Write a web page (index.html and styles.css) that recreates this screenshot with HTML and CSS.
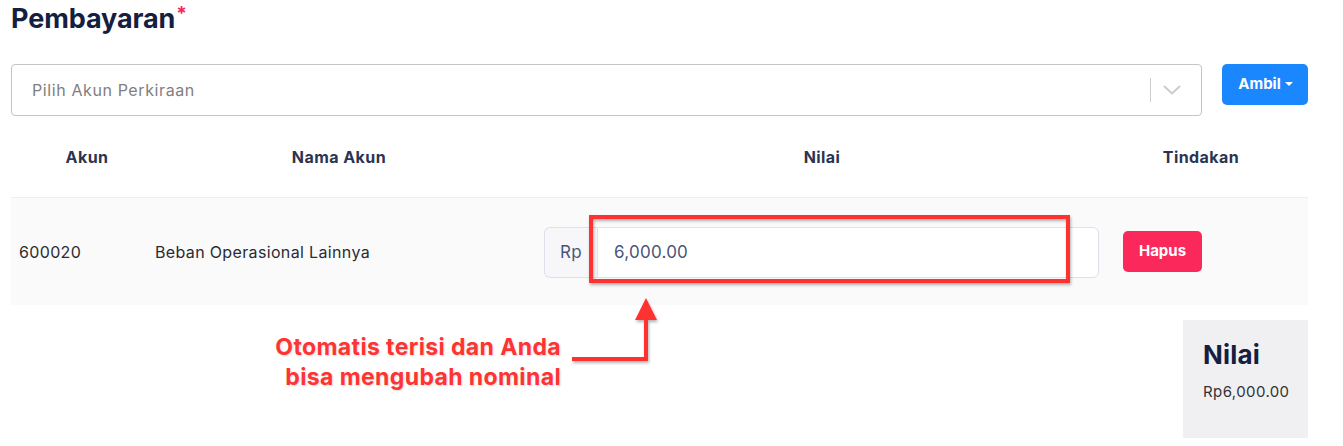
FILE: index.html
```html
<!DOCTYPE html>
<html lang="id">
<head>
<meta charset="utf-8">
<title>Pembayaran</title>
<link rel="stylesheet" href="styles.css">
</head>
<body>
<div class="page">
  <h2 class="title">Pembayaran<span class="req">*</span></h2>

  <div class="select-row">
    <div class="select">
      <span class="placeholder">Pilih Akun Perkiraan</span>
      <span class="indicators">
        <span class="sep"></span>
        <svg class="chev" width="20" height="20" viewBox="0 0 20 20"><path d="M2.5 6.5 L10 13.5 L17.5 6.5" fill="none" stroke="#cccccc" stroke-width="2" stroke-linecap="round" stroke-linejoin="round"/></svg>
      </span>
    </div>
    <button class="btn-ambil">Ambil<span class="caret"></span></button>
  </div>

  <div class="thead">
    <div class="th">Akun</div>
    <div class="th">Nama Akun</div>
    <div class="th">Nilai</div>
    <div class="th">Tindakan</div>
  </div>

  <div class="trow">
    <div class="td">600020</div>
    <div class="td">Beban Operasional Lainnya</div>
    <div class="td">
      <div class="input-group">
        <span class="addon">Rp</span>
        <span class="input">6,000.00</span>
      </div>
    </div>
    <div class="td"><button class="btn-hapus">Hapus</button></div>
  </div>

  <div class="bottom">
    <div class="note">Otomatis terisi dan Anda<br>bisa mengubah nominal</div>
    <div class="summary">
      <div class="sum-title">Nilai</div>
      <div class="sum-value">Rp6,000.00</div>
    </div>
  </div>

  <svg class="annot" width="1343" height="446" viewBox="0 0 1343 446">
    <defs>
      <filter id="sh" x="-10%" y="-10%" width="120%" height="130%">
        <feDropShadow dx="1" dy="2" stdDeviation="1.5" flood-color="#000" flood-opacity="0.3"/>
      </filter>
    </defs>
    <g filter="url(#sh)">
      <rect x="591" y="217" width="477" height="64" fill="none" stroke="#ff3333" stroke-width="4"/>
      <path d="M572 359 H646 V318" fill="none" stroke="#ff3333" stroke-width="4"/>
      <path d="M635 320 L646 298 L657 320 Z" fill="#ff3333"/>
    </g>
  </svg>
</div>
</body>
</html>
```

FILE: styles.css
```css
* { box-sizing: border-box; }
html, body { margin: 0; padding: 0; background: #ffffff; }
body {
  font-family: Inter, "Noto Sans", "Liberation Sans", sans-serif;
  color: #222;
}
.page {
  position: relative;
  width: 1343px;
  height: 446px;
  padding: 0 35px 0 11px;
  overflow: hidden;
}
.title {
  margin: 3px 0 0;
  font-size: 27px;
  line-height: 32px;
  font-weight: 700;
  color: #14203f;
  letter-spacing: -0.1px;
}
.req {
  color: #f5265d;
  font-size: 19px;
  vertical-align: top;
  position: relative;
  top: -5px;
  margin-left: 1px;
}
.select-row {
  display: flex;
  align-items: flex-start;
  gap: 20px;
  margin-top: 29px;
}
.select {
  flex: 1;
  height: 52px;
  border: 1px solid #c4c4c4;
  border-radius: 4px;
  display: flex;
  align-items: center;
  justify-content: space-between;
  padding-left: 20px;
}
.placeholder {
  color: #808080;
  font-size: 16px;
  letter-spacing: 0.6px;
}
.indicators {
  display: flex;
  align-items: center;
  height: 100%;
}
.sep {
  width: 1px;
  height: 24px;
  background: #cccccc;
  margin-right: 11px;
}
.chev { margin-right: 19px; }
.btn-ambil {
  width: 86px;
  height: 41px;
  border: none;
  border-radius: 5px;
  background: #1a87ff;
  color: #ffffff;
  font-family: inherit;
  font-size: 15px;
  font-weight: 700;
  display: flex;
  align-items: center;
  justify-content: center;
  padding: 0 0 2px 1px;
}
.caret {
  display: inline-block;
  width: 0; height: 0;
  border-left: 4px solid transparent;
  border-right: 4px solid transparent;
  border-top: 4px solid #ffffff;
  margin-left: 4px;
  margin-top: 1px;
}
.thead {
  display: grid;
  grid-template-columns: 152px 352px 614px 144px;
  margin-top: 17px;
  height: 64px;
  align-items: center;
}
.th {
  text-align: center;
  font-size: 16px;
  font-weight: 700;
  letter-spacing: 0.45px;
  color: #2b3450;
  padding-bottom: 16px;
}
.trow {
  display: grid;
  grid-template-columns: 136px 384px 581px 196px;
  height: 108px;
  align-items: center;
  background: #fafafa;
  border-top: 1px solid #eeeeee;
}
.td {
  padding-left: 8px;
  font-size: 16px;
  letter-spacing: 0.35px;
  color: #2b2b33;
}
.td:nth-child(3) { padding: 0 13px; }
.td:nth-child(4) { padding-left: 11px; }
.input-group {
  display: flex;
  height: 51px;
  margin-top: 1px;
}
.addon {
  width: 53px;
  display: flex;
  align-items: center;
  justify-content: center;
  background: #f7f7fa;
  border: 1px solid #dfe0ec;
  border-right: none;
  border-radius: 6px 0 0 6px;
  color: #4a5578;
  font-size: 17px;
  letter-spacing: 0.3px;
}
.input {
  flex: 1;
  display: flex;
  align-items: center;
  background: #ffffff;
  border: 1px solid #dfe0ec;
  border-radius: 0 6px 6px 0;
  padding-left: 16px;
  color: #4a5578;
  font-size: 17px;
  letter-spacing: 0.25px;
}
.btn-hapus {
  width: 79px;
  height: 41px;
  border: none;
  border-radius: 5px;
  background: #fb285c;
  color: #ffffff;
  font-family: inherit;
  font-size: 15px;
  font-weight: 700;
  letter-spacing: 0;
  padding: 0 0 2px;
}
.bottom {
  display: flex;
  justify-content: space-between;
  align-items: flex-start;
  margin-top: 15px;
}
.note {
  width: 550px;
  text-align: right;
  color: #ff3333;
  font-size: 23px;
  font-weight: 700;
  letter-spacing: 0.38px;
  line-height: 30px;
  margin-top: 12px;
  text-shadow: 1px 1px 2px rgba(0,0,0,0.15);
}
.summary {
  width: 125px;
  height: 118px;
  background: #f0f0f3;
  padding: 20px 0 0 20px;
}
.sum-title {
  font-size: 26px;
  font-weight: 700;
  letter-spacing: 0.2px;
  color: #14203f;
  line-height: 30px;
}
.sum-value {
  margin-top: 12px;
  font-size: 15px;
  letter-spacing: 0.4px;
  color: #333;
}
.annot {
  position: absolute;
  left: 0;
  top: 0;
  pointer-events: none;
}
```
